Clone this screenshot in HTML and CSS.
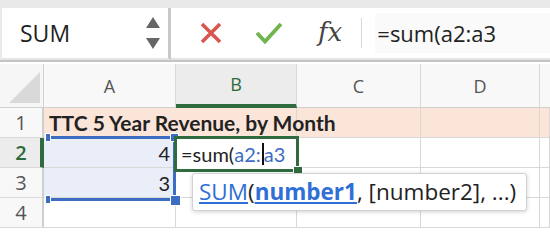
FILE: index.html
```html
<!DOCTYPE html>
<html lang="en">
<head>
    <meta charset="UTF-8">
    <title>Sheet</title>
    <link rel="stylesheet" href="styles.css">
</head>
<body>
    <div class="toolbar">
        <div class="namebox">
            <span class="name">SUM</span>
            <div class="spin">
                <svg width="14" height="11" viewBox="0 0 14 11"><polygon points="7,0 14,11 0,11" fill="#666"/></svg>
                <svg width="14" height="11" viewBox="0 0 14 11"><polygon points="0,0 14,0 7,11" fill="#666"/></svg>
            </div>
        </div>
        <div class="formula">
            <svg class="icon-x" width="22" height="22" viewBox="0 0 22 22"><path d="M2 2 L20 20 M20 2 L2 20" stroke="#d9574f" stroke-width="3.6"/></svg>
            <svg class="icon-ok" width="28" height="22" viewBox="0 0 28 22"><path d="M2 11 L10 19.5 L26 2" stroke="#6fb44c" stroke-width="3.8" fill="none"/></svg>
            <span class="fx">fx</span>
            <span class="sep"></span>
            <span class="formula-text">=sum(a2:a3</span>
        </div>
    </div>

    <div class="sheet">
        <div class="corner"><span class="tri"></span></div>
        <div class="colhead">A</div>
        <div class="colhead active">B</div>
        <div class="colhead">C</div>
        <div class="colhead">D</div>
        <div class="colhead last"></div>

        <div class="rowhead">1</div>
        <div class="cell title">TTC 5 Year Revenue, by Month</div>
        <div class="cell peach"></div>
        <div class="cell peach"></div>
        <div class="cell peach"></div>
        <div class="cell peach"></div>

        <div class="rowhead active">2</div>
        <div class="cell num sel">4</div>
        <div class="cell"></div>
        <div class="cell"></div>
        <div class="cell"></div>
        <div class="cell"></div>

        <div class="rowhead">3</div>
        <div class="cell num sel">3</div>
        <div class="cell"></div>
        <div class="cell"></div>
        <div class="cell"></div>
        <div class="cell"></div>

        <div class="rowhead">4</div>
        <div class="cell"></div>
        <div class="cell"></div>
        <div class="cell"></div>
        <div class="cell"></div>
        <div class="cell"></div>

        <!-- range reference a2:a3 -->
        <div class="range">
            <span class="h tl"></span><span class="h tr"></span>
            <span class="h bl"></span><span class="h br"></span>
        </div>

        <!-- cell being edited -->
        <div class="editor">=sum(<span class="ref">a2:</span><span class="caret"></span><span class="ref">a3</span><span class="fill"></span></div>

        <div class="tip"><span class="fn">SUM</span>(<span class="arg">number1</span>, [number2], ...)</div>
    </div>
</body>
</html>
```

FILE: styles.css
```css
body {
    margin: 0;
    width: 550px;
    height: 232px;
    overflow: hidden;
    background: #ffffff;
    font-family: "Lato", "Liberation Sans", sans-serif;
    color: #222;
}
.toolbar {
    display: flex;
    height: 52px;
    padding-top: 8px;
    background: #e9e9e9;
    border-bottom: 2px solid #c4c4c4;
}
.namebox {
    width: 166px;
    margin-left: 2px;
    display: flex;
    align-items: center;
    justify-content: space-between;
    background: #fff;
    border-right: 3px solid #c8c8c8;
    border-bottom: 2px solid #e4e4e4;
}
.name {
    font-family: "Open Sans", sans-serif;
    font-size: 23px;
    padding-left: 18px;
    color: #222;
}
.spin {
    display: flex;
    flex-direction: column;
    gap: 10px;
    padding-right: 8px;
}
.spin svg { display: block; }
.formula {
    flex: 1;
    display: flex;
    align-items: center;
    background: #fff;
    border-bottom: 2px solid #e4e4e4;
}
.icon-x { margin-left: 29px; }
.icon-ok { margin-left: 33px; }
.fx {
    margin-left: 35px;
    font-family: "DejaVu Serif", serif;
    font-style: italic;
    font-size: 26px;
    color: #444;
    margin-top: -3px;
}
.sep {
    width: 1px;
    height: 30px;
    background: #d8d8d8;
    margin-left: 19px;
}
.formula-text {
    margin-left: 13px;
    font-family: "Open Sans", sans-serif;
    font-size: 22px;
    color: #222;
    align-self: stretch;
    display: flex;
    align-items: center;
    padding-left: 2px;
    flex: 1;
    margin-top: 5px;
    margin-bottom: 5px;
    background: #fafafa;
}
.sheet {
    position: relative;
    margin-top: 2px;
    display: grid;
    grid-template-columns: 44px 132px 121px 124px 119px 10px;
    grid-template-rows: 44px 30px 30px 30px 30px;
}
.corner {
    position: relative;
    background: #f6f6f6;
    border-right: 1px solid #d0d0d0;
    border-bottom: 1px solid #d0d0d0;
}
.tri {
    position: absolute;
    right: 3px;
    bottom: 4px;
    width: 0;
    height: 0;
    border-left: 31px solid transparent;
    border-bottom: 31px solid #d9d9d9;
}
.colhead {
    display: flex;
    align-items: center;
    justify-content: center;
    background: #f8f8f8;
    border-right: 1px solid #d8d8d8;
    border-bottom: 1px solid #d0d0d0;
    font-family: "Open Sans", sans-serif;
    font-size: 18px;
    color: #555;
}
.colhead.active {
    background: #ececec;
    color: #2b6b3c;
    border-bottom: 4px solid #2f6b3e;
}
.colhead.last { border-right: none; }
.rowhead {
    display: flex;
    align-items: center;
    justify-content: center;
    background: #f8f8f8;
    border-right: 2px solid #cfcfcf;
    border-bottom: 1px solid #dadada;
    font-family: "Open Sans", sans-serif;
    font-size: 20px;
    color: #555;
}
.rowhead.active {
    background: #ececec;
    color: #2b6b3c;
    font-weight: 600;
    border-right: 4px solid #2f6b3e;
    padding-left: 2px;
}
.cell {
    border-right: 1px solid #d8d8d8;
    border-bottom: 1px solid #d8d8d8;
    font-size: 20px;
    display: flex;
    align-items: center;
    white-space: nowrap;
}
.peach { background: #fbe5d8; }
.title {
    background: #fbe5d8;
    font-weight: bold;
    font-size: 21px;
    padding-left: 5px;
    overflow: visible;
    z-index: 1;
    border-right: none;
}
.num {
    justify-content: flex-end;
    padding-right: 5px;
    color: #222;
}
.sel { background: #e9eef8; }
.range {
    position: absolute;
    left: 46px;
    top: 72px;
    width: 127px;
    height: 59px;
    border: 3px solid #3d6cc3;
    border-left: none;
    z-index: 2;
}
.h {
    position: absolute;
    width: 7px;
    height: 7px;
    background: #3d6cc3;
    border: 1px solid #fff;
}
.tl { left: -1px; top: -6px; width: 4px; }
.tr { right: -6px; top: -6px; }
.bl { left: -1px; bottom: -6px; width: 4px; }
.br { right: -8px; bottom: -8px; width: 9px; height: 9px; }
.editor {
    position: absolute;
    left: 174px;
    top: 72px;
    width: 115px;
    height: 30px;
    border: 3px solid #2f6b3e;
    background: #fff;
    font-size: 20px;
    padding-left: 4px;
    display: flex;
    align-items: center;
    z-index: 3;
}
.ref { color: #3d6cc3; }
.caret {
    width: 2px;
    height: 22px;
    background: #111;
    margin-left: 1px;
}
.fill {
    position: absolute;
    right: -7px;
    bottom: -7px;
    width: 8px;
    height: 8px;
    background: #2f6b3e;
    border: 1px solid #fff;
}
.tip {
    position: absolute;
    left: 192px;
    top: 109px;
    padding: 2px 10px 3px 6px;
    background: #fff;
    border: 1px solid #d2d2d2;
    border-radius: 3px;
    box-shadow: 0 1px 4px rgba(0, 0, 0, 0.18);
    font-family: "Open Sans", sans-serif;
    font-size: 22.5px;
    color: #222;
    white-space: nowrap;
    z-index: 4;
}
.fn {
    color: #2f6fd6;
    text-decoration: underline;
}
.arg {
    color: #2f6fd6;
    font-weight: bold;
    text-decoration: underline;
}
```
